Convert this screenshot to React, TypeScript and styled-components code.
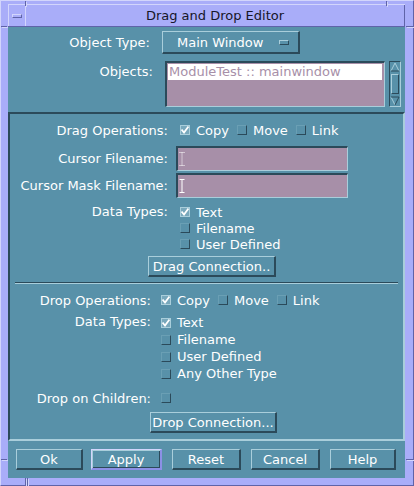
import React from "react";
import styled, { createGlobalStyle } from "styled-components";

const C = {
  teal: "#5891a9",
  dark: "#2b4a5a",
  light: "#a9cedb",
  lav: "#a9adf9",
  lavLight: "#d2d5fc",
  lavDark: "#5f63a8",
  mauve: "#a78fa8",
  text: "#ffffff",
  title: "#161628",
};

const Global = createGlobalStyle`
  html, body { margin: 0; padding: 0; background: ${C.lav}; }
  body { font-family: "DejaVu Sans", "Liberation Sans", sans-serif; font-size: 13px; }
  * { box-sizing: border-box; }
`;

const Window = styled.div`
  position: relative;
  width: 414px;
  height: 486px;
  background: ${C.lav};
  border-top: 1px solid ${C.lavLight};
  border-left: 1px solid ${C.lavLight};
  border-right: 1px solid ${C.lavDark};
  border-bottom: 1px solid ${C.lavDark};
  padding: 3px 8px 7px 7px;
  display: flex;
  flex-direction: column;
`;

const Mark = styled.div<{ $x?: number; $y?: number; $w: number; $h: number; $r?: boolean; $b?: boolean }>`
  position: absolute;
  ${(p) => (p.$r ? `right: ${p.$x}px;` : `left: ${p.$x}px;`)}
  ${(p) => (p.$b ? `bottom: ${p.$y}px;` : `top: ${p.$y}px;`)}
  width: ${(p) => p.$w}px;
  height: ${(p) => p.$h}px;
  background: ${C.lavDark};
  box-shadow: 1px 1px 0 ${C.lavLight};
`;

const TitleBar = styled.div`
  display: flex;
  height: 23px;
  flex: none;
  border-top: 1px solid ${C.lavLight};
  border-bottom: 1px solid ${C.lavDark};
  background: ${C.lav};
`;

const MenuCell = styled.div`
  width: 18px;
  flex: none;
  display: flex;
  align-items: center;
  justify-content: center;
  border-right: 1px solid ${C.lavLight};
  border-left: 1px solid ${C.lavLight};
`;

const MenuGlyph = styled.span`
  width: 10px;
  height: 4px;
  border-top: 1px solid ${C.lavLight};
  border-left: 1px solid ${C.lavLight};
  border-bottom: 1px solid ${C.lavDark};
  border-right: 1px solid ${C.lavDark};
`;

const Title = styled.div`
  flex: 1;
  text-align: center;
  line-height: 21px;
  color: ${C.title};
  font-size: 13px;
  border-right: 1px solid ${C.lavDark};
`;

const Client = styled.div`
  flex: 1;
  background: ${C.teal};
  display: flex;
  flex-direction: column;
  color: ${C.text};
`;

const TopSection = styled.div`
  display: flex;
  flex-direction: column;
  padding-top: 4px;
`;

const FormRow = styled.div<{ $h: number; $mt?: number; $top?: boolean; $gap?: number }>`
  display: flex;
  align-items: ${(p) => (p.$top ? "flex-start" : "center")};
  height: ${(p) => p.$h}px;
  margin-top: ${(p) => p.$mt ?? 0}px;
  gap: ${(p) => p.$gap ?? 8}px;
`;

const Label = styled.div<{ $w: number; $pt?: number }>`
  width: ${(p) => p.$w}px;
  flex: none;
  text-align: right;
  white-space: nowrap;
  padding-top: ${(p) => p.$pt ?? 0}px;
  color: ${C.text};
`;

const OptionMenu = styled.div`
  width: 138px;
  height: 23px;
  display: flex;
  align-items: center;
  justify-content: space-between;
  padding: 0 9px 0 14px;
  border-top: 1px solid ${C.light};
  border-left: 1px solid ${C.light};
  border-bottom: 2px solid ${C.dark};
  border-right: 2px solid ${C.dark};
`;

const OptionGlyph = styled.span`
  width: 10px;
  height: 5px;
  border-top: 1px solid ${C.light};
  border-left: 1px solid ${C.light};
  border-bottom: 1px solid ${C.dark};
  border-right: 1px solid ${C.dark};
`;

const ListBox = styled.div`
  width: 220px;
  height: 46px;
  background: ${C.mauve};
  border-top: 2px solid ${C.dark};
  border-left: 2px solid ${C.dark};
  border-bottom: 1px solid ${C.light};
  border-right: 1px solid ${C.light};
  padding: 1px 2px 0 1px;
`;

const ListItem = styled.div<{ $selected?: boolean }>`
  height: 16px;
  line-height: 16px;
  padding-left: 1px;
  background: ${(p) => (p.$selected ? "#ffffff" : "transparent")};
  color: ${C.mauve};
  white-space: nowrap;
`;

const ScrollBar = styled.div`
  width: 12px;
  height: 46px;
  margin-left: -8px;
  display: flex;
  flex-direction: column;
  border-top: 1px solid ${C.dark};
  border-left: 1px solid ${C.dark};
  border-bottom: 1px solid ${C.light};
  border-right: 1px solid ${C.light};
`;

const Slider = styled.div`
  flex: 1;
  margin: 1px 1px;
  border-top: 1px solid ${C.light};
  border-left: 1px solid ${C.light};
  border-bottom: 1px solid ${C.dark};
  border-right: 1px solid ${C.dark};
`;

const Frame = styled.div`
  margin-top: 5px;
  height: 329px;
  flex: none;
  border-top: 2px solid ${C.dark};
  border-left: 2px solid ${C.dark};
  border-bottom: 2px solid ${C.light};
  border-right: 2px solid ${C.light};
  display: flex;
  flex-direction: column;
  padding-top: 8px;
`;

const CheckRow = styled.div<{ $ml?: number }>`
  display: flex;
  align-items: center;
  gap: 8px;
  margin-left: ${(p) => p.$ml ?? 0}px;
`;

const CheckItem = styled.span`
  display: flex;
  align-items: center;
  gap: 6px;
  white-space: nowrap;
`;

const Box = styled.span<{ $on?: boolean }>`
  width: 10px;
  height: 10px;
  flex: none;
  display: flex;
  align-items: center;
  justify-content: center;
  background: ${(p) => (p.$on ? "#78a8bc" : C.teal)};
  border-top: 1px solid ${(p) => (p.$on ? C.light : "#6a9fb4")};
  border-left: 1px solid ${(p) => (p.$on ? C.light : "#6a9fb4")};
  border-bottom: 1px solid ${(p) => (p.$on ? C.light : C.dark)};
  border-right: 1px solid ${(p) => (p.$on ? C.light : C.dark)};
`;

const CheckCol = styled.div<{ $row: number; $ml?: number }>`
  display: flex;
  flex-direction: column;
  margin-left: ${(p) => p.$ml ?? 0}px;
  & > * {
    height: ${(p) => p.$row}px;
  }
`;

const TypeBlock = styled.div<{ $mt: number }>`
  display: flex;
  align-items: flex-start;
  margin-top: ${(p) => p.$mt}px;
`;

const TextField = styled.div`
  width: 172px;
  height: 25px;
  background: ${C.mauve};
  border-top: 2px solid ${C.dark};
  border-left: 2px solid ${C.dark};
  border-bottom: 1px solid ${C.light};
  border-right: 1px solid ${C.light};
  display: flex;
  align-items: center;
  padding-left: 1px;
`;

const PushButton = styled.div<{ $w: number; $ml?: number; $mt?: number; $default?: boolean }>`
  width: ${(p) => p.$w}px;
  height: 21px;
  flex: none;
  margin-left: ${(p) => p.$ml ?? 0}px;
  margin-top: ${(p) => p.$mt ?? 0}px;
  display: flex;
  align-items: center;
  justify-content: center;
  white-space: nowrap;
  color: ${C.text};
  border-top: 1px solid ${(p) => (p.$default ? C.lavLight : C.light)};
  border-left: 1px solid ${(p) => (p.$default ? C.lavLight : C.light)};
  border-bottom: 2px solid ${(p) => (p.$default ? "#8c90e6" : C.dark)};
  border-right: 2px solid ${(p) => (p.$default ? "#8c90e6" : C.dark)};
  ${(p) => (p.$default ? `box-shadow: inset 1px 1px 0 ${C.light}, inset -1px -1px 0 ${C.dark};` : "")}
`;

const Separator = styled.div`
  margin: 5px 5px 0 5px;
  height: 2px;
  flex: none;
  border-top: 1px solid ${C.dark};
  border-bottom: 1px solid ${C.light};
`;

const ActionBar = styled.div`
  display: flex;
  padding: 8px 0 0 8px;
  gap: 10px;
`;

const Check = () => (
  <svg width="8" height="8" viewBox="0 0 8 8">
    <path d="M0.5 3.5 L3 6.5 L7.5 0.5" stroke="#ffffff" strokeWidth="1.8" fill="none" />
  </svg>
);

const CheckBox = ({ on }: { on?: boolean }) => <Box $on={on}>{on ? <Check /> : null}</Box>;

const Arrow = ({ down }: { down?: boolean }) => (
  <svg width="10" height="11" viewBox="0 0 10 11" style={{ display: "block" }}>
    {down ? (
      <>
        <path d="M1 2 L5 10" stroke={C.light} strokeWidth="1" fill="none" />
        <path d="M1 2 L9 2 L5 10" stroke={C.dark} strokeWidth="1" fill="none" />
      </>
    ) : (
      <>
        <path d="M1 9 L5 1 L9 9" stroke={C.light} strokeWidth="1" fill="none" />
        <path d="M1 9 L9 9" stroke={C.dark} strokeWidth="1" fill="none" />
      </>
    )}
  </svg>
);

const IBeam = ({ dotted }: { dotted?: boolean }) => (
  <svg width="6" height="14" viewBox="0 0 6 14" style={{ display: "block" }}>
    <path
      d="M0.5 0.5 H5.5 M3 0.5 V13.5 M0.5 13.5 H5.5"
      stroke="#ffffff"
      strokeWidth="1"
      strokeDasharray={dotted ? "1 1" : undefined}
      fill="none"
    />
  </svg>
);

export default function App() {
  return (
    <>
      <Global />
      <Window>
        <Mark $x={24} $y={0} $w={1} $h={5} />
        <Mark $x={26} $y={0} $w={1} $h={5} $r />
        <Mark $x={24} $y={0} $w={1} $h={7} $b />
        <Mark $x={26} $y={0} $w={1} $h={7} $b />
        <Mark $x={0} $y={25} $w={6} $h={1} />
        <Mark $x={0} $y={25} $w={7} $h={1} $r />
        <Mark $x={0} $y={25} $w={6} $h={1} $b />
        <Mark $x={0} $y={25} $w={7} $h={1} $r $b />
        <TitleBar>
          <MenuCell>
            <MenuGlyph />
          </MenuCell>
          <Title>Drag and Drop Editor</Title>
        </TitleBar>
        <Client>
          <TopSection>
            <FormRow $h={23} $gap={12}>
              <Label $w={142}>Object Type:</Label>
              <OptionMenu>
                <span>Main Window</span>
                <OptionGlyph />
              </OptionMenu>
            </FormRow>
            <FormRow $h={46} $mt={7} $top $gap={12}>
              <Label $w={145} $pt={3}>Objects:</Label>
              <ListBox>
                <ListItem $selected>ModuleTest :: mainwindow</ListItem>
              </ListBox>
              <ScrollBar>
                <Arrow />
                <Slider />
                <Arrow down />
              </ScrollBar>
            </FormRow>
          </TopSection>

          <Frame>
            <FormRow $h={16}>
              <Label $w={158}>Drag Operations:</Label>
              <CheckRow $ml={4}>
                <CheckItem>
                  <CheckBox on />
                  Copy
                </CheckItem>
                <CheckItem>
                  <CheckBox />
                  Move
                </CheckItem>
                <CheckItem>
                  <CheckBox />
                  Link
                </CheckItem>
              </CheckRow>
            </FormRow>
            <FormRow $h={25} $mt={8}>
              <Label $w={158}>Cursor Filename:</Label>
              <TextField>
                <IBeam dotted />
              </TextField>
            </FormRow>
            <FormRow $h={25} $mt={2}>
              <Label $w={158}>Cursor Mask Filename:</Label>
              <TextField>
                <IBeam />
              </TextField>
            </FormRow>
            <TypeBlock $mt={6}>
              <Label $w={158} $pt={0}>
                Data Types:
              </Label>
              <CheckCol $row={16} $ml={12}>
                <CheckItem>
                  <CheckBox on />
                  Text
                </CheckItem>
                <CheckItem>
                  <CheckBox />
                  Filename
                </CheckItem>
                <CheckItem>
                  <CheckBox />
                  User Defined
                </CheckItem>
              </CheckCol>
            </TypeBlock>
            <PushButton $w={128} $ml={138} $mt={4}>
              Drag Connection..
            </PushButton>
            <Separator />

            <FormRow $h={16} $mt={8} $gap={10}>
              <Label $w={141}>Drop Operations:</Label>
              <CheckRow>
                <CheckItem>
                  <CheckBox on />
                  Copy
                </CheckItem>
                <CheckItem>
                  <CheckBox />
                  Move
                </CheckItem>
                <CheckItem>
                  <CheckBox />
                  Link
                </CheckItem>
              </CheckRow>
            </FormRow>
            <TypeBlock $mt={6}>
              <Label $w={141}>Data Types:</Label>
              <CheckCol $row={17} $ml={10}>
                <CheckItem>
                  <CheckBox on />
                  Text
                </CheckItem>
                <CheckItem>
                  <CheckBox />
                  Filename
                </CheckItem>
                <CheckItem>
                  <CheckBox />
                  User Defined
                </CheckItem>
                <CheckItem>
                  <CheckBox />
                  Any Other Type
                </CheckItem>
              </CheckCol>
            </TypeBlock>
            <FormRow $h={16} $mt={8} $gap={10}>
              <Label $w={141}>Drop on Children:</Label>
              <CheckBox />
            </FormRow>
            <PushButton $w={127} $ml={140} $mt={6}>
              Drop Connection...
            </PushButton>
          </Frame>

          <ActionBar>
            <PushButton $w={67}>Ok</PushButton>
            <PushButton $w={71} $ml={-2} $default>
              Apply
            </PushButton>
            <PushButton $w={69}>Reset</PushButton>
            <PushButton $w={69}>Cancel</PushButton>
            <PushButton $w={66}>Help</PushButton>
          </ActionBar>
        </Client>
      </Window>
    </>
  );
}
